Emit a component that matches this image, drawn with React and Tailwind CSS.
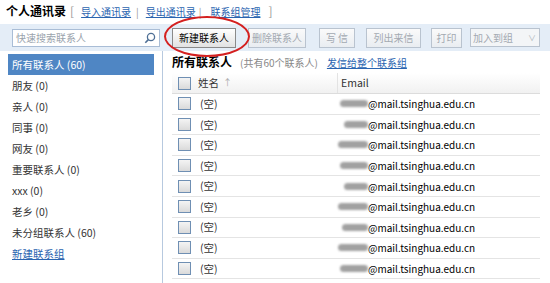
import React from "react";

const groups = [
  "所有联系人 (60)",
  "朋友 (0)",
  "亲人 (0)",
  "同事 (0)",
  "网友 (0)",
  "重要联系人 (0)",
  "xxx (0)",
  "老乡 (0)",
  "未分组联系人 (60)",
];

const blobs = [28, 24, 30, 28, 24, 30, 26, 30, 28];

function Check() {
  return (
    <span className="block w-[13px] h-[13px] border border-[#6f8fb3] bg-gradient-to-b from-[#f4f4f4] to-[#dadada]" />
  );
}

function Btn({ children, active, w }) {
  return (
    <div
      className={`h-[20px] flex items-center justify-center border text-[10px] ${
        active
          ? "border-[#8a8a8a] text-black bg-gradient-to-b from-white to-[#e2e2e2]"
          : "border-[#b9c3cf] text-[#a3a9b1] bg-gradient-to-b from-[#fafafa] to-[#e9edf1]"
      } ${w}`}
    >
      {children}
    </div>
  );
}

export default function App() {
  return (
    <div
      className="relative w-[550px] h-[283px] bg-white overflow-hidden text-[10.5px] text-[#333]"
      style={{ fontFamily: '"Noto Sans CJK SC", "Liberation Sans", sans-serif' }}
    >
      {/* title */}
      <div className="h-[24px] flex items-center pl-[6px] pb-[2px]">
        <span className="text-[12px] font-bold text-black">个人通讯录</span>
        <span className="text-[10px] text-[#999] flex items-center ml-[4px]">
          <span className="text-[12px]">[</span>
          <span className="text-[#2a64b0] underline ml-[7px]">导入通讯录</span>
          <span className="ml-[5px]">|</span>
          <span className="text-[#2a64b0] underline ml-[7px]">导出通讯录</span>
          <span className="ml-[3px]">|</span>
          <span className="text-[#2a64b0] underline ml-[9px]">联系组管理</span>
          <span className="text-[12px] ml-[8px]">]</span>
        </span>
      </div>

      {/* toolbar */}
      <div className="h-[27px] bg-[#e4edf7] flex items-center pl-[12px]">
        <div className="w-[148px] h-[18px] bg-white border border-[#a9bdd6] flex items-center justify-between px-[3px]">
          <span className="text-[10px] text-[#9aa3ad]">快速搜索联系人</span>
          <svg width="12" height="12" viewBox="0 0 12 12">
            <circle cx="7" cy="5" r="3.6" fill="none" stroke="#4e6f95" strokeWidth="1.3" />
            <line x1="4.4" y1="7.6" x2="1.3" y2="10.7" stroke="#4e6f95" strokeWidth="1.6" />
          </svg>
        </div>
        <div className="ml-[12px] flex items-center">
          <Btn active w="w-[64px]">新建联系人</Btn>
          <div className="ml-[12px]">
            <Btn w="w-[58px]">删除联系人</Btn>
          </div>
          <div className="ml-[13px]">
            <Btn w="w-[36px]">写 信</Btn>
          </div>
          <div className="ml-[11px]">
            <Btn w="w-[55px]">列出来信</Btn>
          </div>
          <div className="ml-[10px]">
            <Btn w="w-[31px]">打印</Btn>
          </div>
          <div className="ml-[8px] w-[70px] h-[19px] border border-[#b9c3cf] bg-[#f3f5f7] flex items-center justify-between pl-[2px] pr-[3px]">
            <span className="text-[10px] text-[#a3a9b1]">加入到组</span>
            <span className="text-[8px] text-[#b0b6bd]">∨</span>
          </div>
        </div>
      </div>

      {/* body */}
      <div className="flex h-[232px]">
        <div className="w-[163px] pl-[8px] pr-[8px] pt-[3px] border-r border-[#b7c9df]">
          {groups.map((g, i) => (
            <div
              key={g}
              className={`h-[21px] flex items-center pl-[4px] ${
                i === 0 ? "bg-[#4f86c4] text-white" : "text-[#333]"
              }`}
            >
              {g}
            </div>
          ))}
          <div className="h-[21px] flex items-center pl-[4px] text-[#2a64b0] underline">
            新建联系组
          </div>
        </div>

        <div className="flex-1 pl-[9px] pr-[10px]">
          <div className="h-[22px] flex items-center">
            <span className="text-[12px] font-bold text-black">所有联系人</span>
            <span className="text-[10px] text-[#888] ml-[8px]">(共有60个联系人)</span>
            <span className="text-[10px] text-[#2a64b0] underline ml-[9px]">发信给整个联系组</span>
          </div>
          <div className="h-[21px] flex items-center border-b border-[#dcdcdc] bg-gradient-to-b from-white to-[#f1f1f1]">
            <div className="w-[25px] flex justify-center">
              <Check />
            </div>
            <div className="w-[141px] flex items-center gap-[4px] border-r border-[#e3e3e3] h-full pl-[1px]">
              <span>姓名</span>
              <span className="text-[9px] text-[#aaa]">↑</span>
            </div>
            <div className="pl-[3px]">Email</div>
          </div>
          {blobs.map((b, i) => (
            <div key={i} className="h-[20.6px] flex items-center border-b border-[#e4e4e4]">
              <div className="w-[25px] flex justify-center">
                <Check />
              </div>
              <div className="w-[141px] pl-[3px]">(空)</div>
              <div className="flex items-center">
                <span
                  className="h-[7px] rounded-full bg-[#8a8a8a] blur-[1px] opacity-80"
                  style={{ width: `${b}px`, marginLeft: `${30 - b}px` }}
                />
                <span className="text-[10px] text-black">@mail.tsinghua.edu.cn</span>
              </div>
            </div>
          ))}
        </div>
      </div>

      {/* red ellipse highlight */}
      <div className="absolute left-[164px] top-[16px] w-[86px] h-[41px] border-2 border-[#d42020] rounded-[50%]" />
    </div>
  );
}
